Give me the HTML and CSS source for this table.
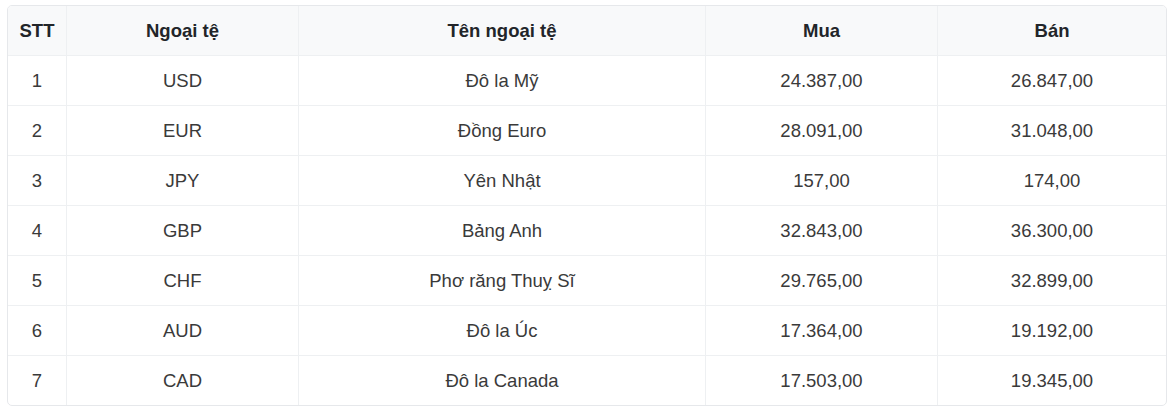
FILE: index.html
```html
<!DOCTYPE html>
<html lang="vi">
<head>
<meta charset="utf-8">
<link rel="stylesheet" href="styles.css">
</head>
<body>
<div class="wrap">
<table class="rates">
<colgroup>
<col class="c1"><col class="c2"><col class="c3"><col class="c4"><col class="c5">
</colgroup>
<thead>
<tr><th>STT</th><th>Ngoại tệ</th><th>Tên ngoại tệ</th><th>Mua</th><th>Bán</th></tr>
</thead>
<tbody>
<tr><td>1</td><td>USD</td><td>Đô la Mỹ</td><td>24.387,00</td><td>26.847,00</td></tr>
<tr><td>2</td><td>EUR</td><td>Đồng Euro</td><td>28.091,00</td><td>31.048,00</td></tr>
<tr><td>3</td><td>JPY</td><td>Yên Nhật</td><td>157,00</td><td>174,00</td></tr>
<tr><td>4</td><td>GBP</td><td>Bảng Anh</td><td>32.843,00</td><td>36.300,00</td></tr>
<tr><td>5</td><td>CHF</td><td>Phơ răng Thuỵ Sĩ</td><td>29.765,00</td><td>32.899,00</td></tr>
<tr><td>6</td><td>AUD</td><td>Đô la Úc</td><td>17.364,00</td><td>19.192,00</td></tr>
<tr><td>7</td><td>CAD</td><td>Đô la Canada</td><td>17.503,00</td><td>19.345,00</td></tr>
</tbody>
</table>
</div>
</body>
</html>
```
FILE: styles.css
```css
html, body {
  margin: 0;
  padding: 0;
  background: #ffffff;
}
.wrap {
  padding: 5px 7px 0 7px;
}
.rates {
  width: 1160px;
  border-collapse: separate;
  border-spacing: 0;
  border: 1px solid #e6e8eb;
  border-radius: 5px;
  overflow: hidden;
  table-layout: fixed;
  font-family: "Liberation Sans", Arial, sans-serif;
  font-size: 18.5px;
  color: #3a3a3a;
}
.c1 { width: 58px; }
.c2 { width: 232px; }
.c3 { width: 407px; }
.c4 { width: 232px; }
.c5 { width: auto; }
.rates th, .rates td {
  height: 49px;
  padding: 0 8px;
  text-align: center;
  vertical-align: middle;
  border-left: 1px solid #eef0f2;
  border-top: 1px solid #eef0f2;
}
.rates tr > :first-child { border-left: none; }
.rates thead th {
  border-top: none;
  background: #f8f9fa;
  font-weight: bold;
  color: #222529;
}
.rates tbody td {
  font-weight: normal;
}
```
